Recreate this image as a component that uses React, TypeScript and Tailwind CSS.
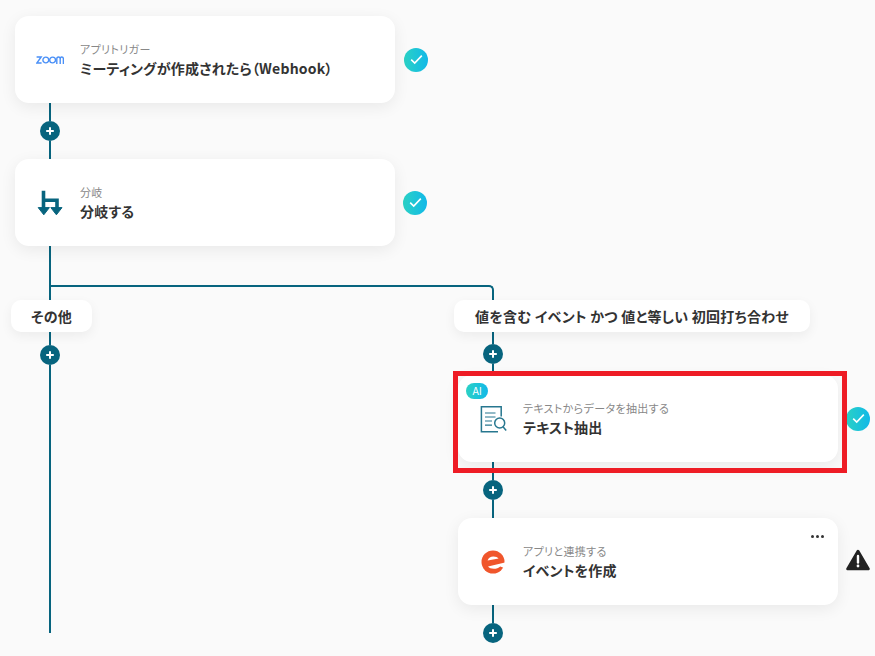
const BRAND = "bg-[#07647e]";

function Plus() {
  return (
    <div className={`flex h-5 w-5 shrink-0 items-center justify-center rounded-full ${BRAND}`}>
      <svg width="10" height="10" viewBox="0 0 10 10"><path d="M5 1.2v7.6M1.2 5h7.6" stroke="#fff" strokeWidth="2" /></svg>
    </div>
  );
}

function Connector({ h }: { h: string }) {
  return (
    <div className={`flex w-5 flex-col items-center ${h}`}>
      <div className={`w-[2px] flex-1 ${BRAND}`} />
      <Plus />
      <div className={`w-[2px] flex-1 ${BRAND}`} />
    </div>
  );
}

function Check() {
  return (
    <div className="flex h-6 w-6 shrink-0 items-center justify-center rounded-full bg-gradient-to-r from-[#2bd1c4] to-[#12b8e8]">
      <svg width="13" height="11" viewBox="0 0 13 11" fill="none"><path d="M1.2 5.6 4.7 9 11.8 1.6" stroke="#fff" strokeWidth="1.6" /></svg>
    </div>
  );
}

function Card({ sub, title, icon, children }: { sub: string; title: string; icon: React.ReactNode; children?: React.ReactNode }) {
  return (
    <div className="relative flex h-[87px] w-[380px] shrink-0 items-center rounded-[14px] bg-white shadow-[0_4px_16px_rgba(0,0,0,0.07)]">
      <div className="flex w-[65px] shrink-0 justify-center pl-[5px]">{icon}</div>
      <div className="flex flex-col">
        <span className="mb-[2px] text-[11px] leading-[14px] tracking-[0.35px] text-[#888]">{sub}</span>
        <span className="text-[14px] leading-[20px] font-semibold tracking-[0.2px] text-[#333]">{title}</span>
      </div>
      {children}
    </div>
  );
}

function Pill({ label, className }: { label: string; className: string }) {
  return (
    <div className={`relative z-10 flex h-8 shrink-0 items-center justify-center rounded-[10px] bg-white text-[14px] font-semibold tracking-[0.25px] text-[#333] shadow-[0_4px_12px_rgba(0,0,0,0.06)] ${className}`}>
      {label}
    </div>
  );
}

function ZoomLogo() {
  return (
    <svg width="28" height="8" viewBox="0 0 28 8" fill="none" stroke="#4a90f7" strokeWidth="1.4">
      <path d="M.6 1H5.2L.8 7H5.6" />
      <circle cx="9.8" cy="4" r="2.9" />
      <circle cx="16.6" cy="4" r="2.9" />
      <path d="M20.8 8V3C20.8 .4 24.2 .4 24.2 3V8M24.2 3C24.2 .4 27.4 .4 27.4 3V8" />
    </svg>
  );
}

function BranchIcon() {
  return (
    <svg width="26" height="26" viewBox="0 0 26 26" fill="none">
      <path d="M6.5 .7V18M6.5 10.2H20V18" stroke="#07647e" strokeWidth="3.6" />
      <path d="M1.2 17.6H12.4L6.8 24.8Z M13.8 17.6H25L19.4 24.8Z" fill="#07647e" stroke="#07647e" strokeLinejoin="round" />
    </svg>
  );
}

function DocIcon() {
  return (
    <svg width="27" height="28" viewBox="0 0 27 28" fill="none" stroke="#27778f" strokeWidth="1.5">
      <path d="M18 26.8H1.4V1.8H21.2V11.5" />
      <path d="M5 8H15.5M5 12H15.5M5 16H12M5 20.2H12" strokeWidth="1.2" />
      <circle cx="19.7" cy="18" r="5" />
      <path d="M23.2 22 26.2 25.4" />
    </svg>
  );
}

function EventIcon() {
  return (
    <svg width="24" height="24" viewBox="0 0 24 24">
      <circle cx="12" cy="12" r="11.5" fill="#f0562c" />
      <path d="M6.6 10.6C7.4 7.8 9.6 6.4 12.4 6.4c2.4 0 4.2.9 5.2 2.2Z" fill="#fff" />
      <path d="M7 16.6 24 12.6V18.2L19.2 16.4C17.6 18 15.4 18.8 12.8 18.8 10.2 18.8 8.2 18 7 16.6Z" fill="#fff" />
    </svg>
  );
}

function WarnIcon() {
  return (
    <svg width="24" height="22" viewBox="0 0 24 22" className="mb-1">
      <path d="M12 2 22.5 20H1.5Z" fill="#222" stroke="#222" strokeWidth="2.6" strokeLinejoin="round" />
      <path d="M12 7v6.5" stroke="#fff" strokeWidth="2.4" strokeLinecap="round" />
      <circle cx="12" cy="17" r="1.4" fill="#fff" />
    </svg>
  );
}

export default function App() {
  return (
    <div className="relative grid h-[656px] w-[875px] grid-cols-[453px_1fr] overflow-hidden bg-[#fafafa] font-['Noto_Sans_CJK_JP','Noto_Sans',sans-serif] [font-feature-settings:'palt']">
      {/* trigger and branch column */}
      <div className="flex flex-col pt-4 pl-[11px]">
        <div className="flex items-center gap-[9px] pl-1">
          <Card sub="アプリトリガー" title="ミーティングが作成されたら（Webhook）" icon={<ZoomLogo />} />
          <Check />
        </div>
        <div className="pl-[29px]"><Connector h="h-14" /></div>
        <div className="flex items-center gap-2 pl-1">
          <Card sub="分岐" title="分岐する" icon={<BranchIcon />} />
          <Check />
        </div>
        <div className="pl-[38px]"><div className={`h-[54px] w-[2px] ${BRAND}`} /></div>
        <Pill label="その他" className="w-[81px]" />
        <div className="pl-[29px]"><Connector h="h-[301px] [&>div:first-child]:max-h-[13px]" /></div>
      </div>

      {/* condition column */}
      <div className="flex flex-col pt-[300px]">
        <Pill label="値を含む イベント かつ 値と等しい 初回打ち合わせ" className="ml-px w-[356px]" />
        <div className="pl-[30px]"><Connector h="h-[43px]" /></div>
        <div className="flex items-center gap-2 pl-[5px]">
          <Card sub="テキストからデータを抽出する" title="テキスト抽出" icon={<DocIcon />}>
            <div className="absolute top-2 left-2 flex h-4 w-[22px] items-center justify-center rounded-full bg-gradient-to-r from-[#2bd1c4] to-[#12b8e8] font-['Inter',sans-serif] text-[10px] leading-none text-white">AI</div>
            <div className="absolute -top-1 -right-[9px] -bottom-[11px] -left-[5px] z-10 border-[5px] border-[#ee1c25]" />
          </Card>
          <Check />
        </div>
        <div className="pl-[30px]"><Connector h="h-14" /></div>
        <div className="flex items-center gap-2 pl-[5px]">
          <Card sub="アプリと連携する" title="イベントを作成" icon={<EventIcon />}>
            <div className="absolute top-[17px] right-[14px] flex gap-[2px]">
              <span className="h-[3px] w-[3px] rounded-full bg-[#333]" />
              <span className="h-[3px] w-[3px] rounded-full bg-[#333]" />
              <span className="h-[3px] w-[3px] rounded-full bg-[#333]" />
            </div>
          </Card>
          <WarnIcon />
        </div>
        <div className="flex w-5 flex-col items-center pl-0 ml-[30px]">
          <div className={`h-[18px] w-[2px] ${BRAND}`} />
          <Plus />
        </div>
      </div>

      {/* branch rail that runs over both columns */}
      <div className="absolute top-[285px] left-[50px] h-[15px] w-[444px] rounded-tr-[5px] border-t-2 border-r-2 border-[#07647e]" />
    </div>
  );
}
